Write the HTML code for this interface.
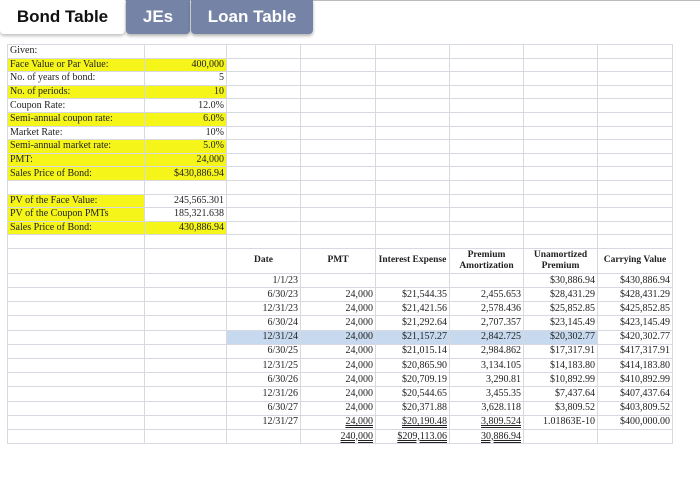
<!DOCTYPE html>
<html><head><style>
body{margin:0;width:700px;height:496px;background:#fff;position:relative;overflow:hidden;font-family:"Liberation Serif",serif;}
.topline{position:absolute;left:0;top:0;width:700px;height:1px;background:#bbb}
.tab{position:absolute;top:0;height:34px;font-family:"Liberation Sans",sans-serif;font-weight:bold;font-size:17px;line-height:34px;text-align:center;border-radius:0 0 4px 4px}
.t1{left:0;width:125px;background:#fff;color:#111;box-shadow:0 2px 3px rgba(0,0,0,.25)}
.t2{left:126px;width:64px;background:#7483a6;color:#fff;box-shadow:0 2px 3px rgba(0,0,0,.3)}
.t3{left:191px;width:122px;background:#7483a6;color:#fff;box-shadow:0 2px 3px rgba(0,0,0,.3)}
table{position:absolute;left:7px;top:44px;border-collapse:collapse;table-layout:fixed;font-size:10px;color:#222}
td{border:1px solid #d6d9df;height:12.6px;padding:0 2px;white-space:nowrap;overflow:hidden;line-height:12px}
td.r{text-align:right}
.y td.a,.y td.b{background:#f5f51a}
tr.h td{height:24px;font-weight:bold;text-align:center;font-size:9.5px;line-height:11px}
tr.l td{height:13.2px}
.bl{background:#c6d9ee}
u{text-decoration:underline double}
</style></head><body>
<div class="topline"></div>
<div class="tab t1">Bond Table</div>
<div class="tab t2">JEs</div>
<div class="tab t3">Loan Table</div>
<table>
<colgroup><col style="width:137px"><col style="width:82px"><col style="width:74px"><col style="width:75px"><col style="width:74px"><col style="width:74px"><col style="width:74px"><col style="width:75px"></colgroup>
<tr><td>Given:</td><td></td><td></td><td></td><td></td><td></td><td></td><td></td></tr>
<tr class="y"><td class="a">Face Value or Par Value:</td><td class="b r">400,000</td><td></td><td></td><td></td><td></td><td></td><td></td></tr>
<tr><td>No. of years of bond:</td><td class="r">5</td><td></td><td></td><td></td><td></td><td></td><td></td></tr>
<tr class="y"><td class="a">No. of periods:</td><td class="b r">10</td><td></td><td></td><td></td><td></td><td></td><td></td></tr>
<tr><td>Coupon Rate:</td><td class="r">12.0%</td><td></td><td></td><td></td><td></td><td></td><td></td></tr>
<tr class="y"><td class="a">Semi-annual coupon rate:</td><td class="b r">6.0%</td><td></td><td></td><td></td><td></td><td></td><td></td></tr>
<tr><td>Market Rate:</td><td class="r">10%</td><td></td><td></td><td></td><td></td><td></td><td></td></tr>
<tr class="y"><td class="a">Semi-annual market rate:</td><td class="b r">5.0%</td><td></td><td></td><td></td><td></td><td></td><td></td></tr>
<tr class="y"><td class="a">PMT:</td><td class="b r">24,000</td><td></td><td></td><td></td><td></td><td></td><td></td></tr>
<tr class="y"><td class="a">Sales Price of Bond:</td><td class="b r">$430,886.94</td><td></td><td></td><td></td><td></td><td></td><td></td></tr>
<tr><td></td><td></td><td></td><td></td><td></td><td></td><td></td><td></td></tr>
<tr class="y"><td class="a">PV of the Face Value:</td><td class="r">245,565.301</td><td></td><td></td><td></td><td></td><td></td><td></td></tr>
<tr class="y"><td class="a">PV of the Coupon PMTs</td><td class="r">185,321.638</td><td></td><td></td><td></td><td></td><td></td><td></td></tr>
<tr class="y"><td class="a">Sales Price of Bond:</td><td class="b r">430,886.94</td><td></td><td></td><td></td><td></td><td></td><td></td></tr>
<tr><td></td><td></td><td></td><td></td><td></td><td></td><td></td><td></td></tr>
<tr class="h"><td></td><td></td><td>Date</td><td>PMT</td><td>Interest Expense</td><td>Premium<br>Amortization</td><td>Unamortized<br>Premium</td><td>Carrying Value</td></tr>
<tr class="l"><td></td><td></td><td class="r">1/1/23</td><td></td><td></td><td></td><td class="r">$30,886.94</td><td class="r">$430,886.94</td></tr>
<tr class="l"><td></td><td></td><td class="r">6/30/23</td><td class="r">24,000</td><td class="r">$21,544.35</td><td class="r">2,455.653</td><td class="r">$28,431.29</td><td class="r">$428,431.29</td></tr>
<tr class="l"><td></td><td></td><td class="r">12/31/23</td><td class="r">24,000</td><td class="r">$21,421.56</td><td class="r">2,578.436</td><td class="r">$25,852.85</td><td class="r">$425,852.85</td></tr>
<tr class="l"><td></td><td></td><td class="r">6/30/24</td><td class="r">24,000</td><td class="r">$21,292.64</td><td class="r">2,707.357</td><td class="r">$23,145.49</td><td class="r">$423,145.49</td></tr>
<tr class="l"><td></td><td></td><td class="r bl">12/31/24</td><td class="r bl">24,000</td><td class="r bl">$21,157.27</td><td class="r bl">2,842.725</td><td class="r bl">$20,302.77</td><td class="r">$420,302.77</td></tr>
<tr class="l"><td></td><td></td><td class="r">6/30/25</td><td class="r">24,000</td><td class="r">$21,015.14</td><td class="r">2,984.862</td><td class="r">$17,317.91</td><td class="r">$417,317.91</td></tr>
<tr class="l"><td></td><td></td><td class="r">12/31/25</td><td class="r">24,000</td><td class="r">$20,865.90</td><td class="r">3,134.105</td><td class="r">$14,183.80</td><td class="r">$414,183.80</td></tr>
<tr class="l"><td></td><td></td><td class="r">6/30/26</td><td class="r">24,000</td><td class="r">$20,709.19</td><td class="r">3,290.81</td><td class="r">$10,892.99</td><td class="r">$410,892.99</td></tr>
<tr class="l"><td></td><td></td><td class="r">12/31/26</td><td class="r">24,000</td><td class="r">$20,544.65</td><td class="r">3,455.35</td><td class="r">$7,437.64</td><td class="r">$407,437.64</td></tr>
<tr class="l"><td></td><td></td><td class="r">6/30/27</td><td class="r">24,000</td><td class="r">$20,371.88</td><td class="r">3,628.118</td><td class="r">$3,809.52</td><td class="r">$403,809.52</td></tr>
<tr class="l"><td></td><td></td><td class="r">12/31/27</td><td class="r"><u>24,000</u></td><td class="r"><u>$20,190.48</u></td><td class="r"><u>3,809.524</u></td><td class="r">1.01863E-10</td><td class="r">$400,000.00</td></tr>
<tr class="l"><td></td><td></td><td></td><td class="r"><u>240,000</u></td><td class="r"><u>$209,113.06</u></td><td class="r"><u>30,886.94</u></td><td></td><td></td></tr>
</table>
</body></html>
